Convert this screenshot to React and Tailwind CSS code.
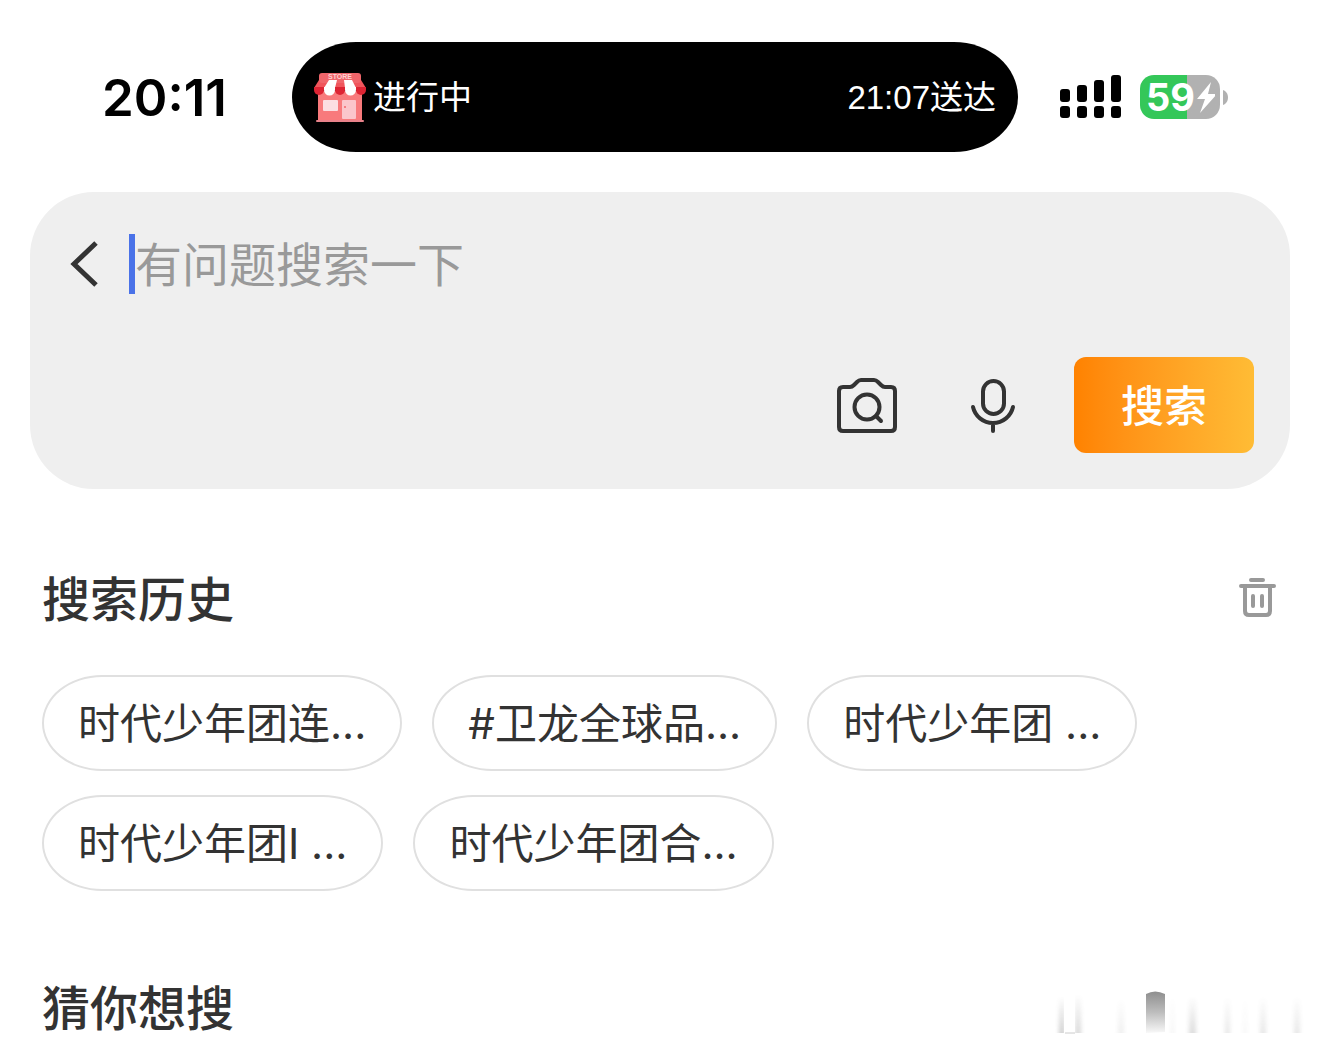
import { useState } from 'react';

// ── Search history ────────────────────────────────────────────────────────────
const history = [
  '时代少年团连...',
  '#卫龙全球品...',
  '时代少年团 ...',
  '时代少年团I ...',
  '时代少年团合...',
];

// ── Icons ─────────────────────────────────────────────────────────────────────
const StoreIcon = () => (
  <svg width="54" height="54" viewBox="0 0 54 54" aria-hidden="true">
    <rect x="5" y="20" width="44" height="30" fill="#f87a7c" />
    <rect x="3" y="49" width="48" height="2" rx="1" fill="#e8828a" />
    <path d="M6 9h42l5 8H1z" fill="#f0565c" />
    <rect x="6" y="2" width="42" height="10" rx="3" fill="#f0666b" />
    <path d="M16 9h8l-2 8H11z" fill="#fff" />
    <path d="M31 9h8l4 8H32z" fill="#fff" />
    <path d="M1 16h10v3a5 5 0 0 1-10 0z" fill="#dd2433" />
    <path d="M11 16h11v3a5.500 5.500 0 0 1-11 0z" fill="#fff" />
    <path d="M22 16h10v3a5 5 0 0 1-10 0z" fill="#dd2433" />
    <path d="M32 16h11v3a5.500 5.500 0 0 1-11 0z" fill="#fff" />
    <path d="M43 16h10v3a5 5 0 0 1-10 0z" fill="#dd2433" />
    <rect x="10" y="29" width="15" height="11" rx="1" fill="#fcdfe2" />
    <rect x="29" y="29" width="14" height="19" rx="1" fill="#fbc6cb" />
    <circle cx="32" cy="36" r="1" fill="#f0666b" />
    <text x="27" y="8" textAnchor="middle" fontSize="7" fontWeight="700" fill="#ffd3d3" fontFamily="Liberation Sans, sans-serif">STORE</text>
  </svg>
);

const SignalIcon = () => (
  <svg width="62" height="44" viewBox="0 0 62 44" aria-hidden="true">
    <rect x="0" y="14" width="10" height="13" rx="3" />
    <rect x="17" y="10" width="10" height="17" rx="3" />
    <rect x="34" y="5" width="10" height="22" rx="3" />
    <rect x="51" y="0" width="10" height="27" rx="3" />
    <rect x="0" y="31" width="10" height="12" rx="3" />
    <rect x="17" y="31" width="10" height="12" rx="3" />
    <rect x="34" y="31" width="10" height="12" rx="3" />
    <rect x="51" y="31" width="10" height="12" rx="3" />
  </svg>
);

const Battery = () => (
  <div className="flex items-center gap-[3px]">
    <div className="flex h-11 w-20 items-center rounded-[14px] bg-linear-to-r from-[#34c759] from-59% to-[#b1b1b1] to-59% pl-[6px]">
      <span className="font-['Inter',sans-serif] text-[38px] leading-[44px] font-bold text-white">59</span>
      <svg width="20" height="32" viewBox="0 0 20 32" fill="#fff" aria-hidden="true">
        <path d="M16 1 2 18h8L5 32l17-19h-9z" />
      </svg>
    </div>
    <svg width="5" height="15" viewBox="0 0 5 15" fill="#b1b1b1" aria-hidden="true">
      <path d="M0 0c3 1 5 4 5 7.500s-2 6.500-5 7.500z" />
    </svg>
  </div>
);

const BackIcon = () => (
  <svg width="28" height="48" viewBox="0 0 28 48" fill="none" stroke="#333" strokeWidth="5" aria-hidden="true">
    <path d="M26 3 4 24l22 21" />
  </svg>
);

const CameraSearchIcon = () => (
  <svg width="72" height="60" viewBox="0 0 72 60" fill="none" stroke="#333" strokeWidth="4" strokeLinecap="round" strokeLinejoin="round" aria-hidden="true">
    <path d="M12 12h7c2 0 3-1 4-2l3-3c1-1 2-2 4-2h13c2 0 3 1 4 2l3 3c1 1 2 2 4 2h6q4 0 4 4v36q0 4-4 4H12q-4 0-4-4V16q0-4 4-4z" />
    <circle cx="36" cy="32" r="12.500" />
    <path d="m45 41 5 5" />
  </svg>
);

const MicIcon = () => (
  <svg width="72" height="60" viewBox="0 0 72 60" fill="none" stroke="#333" strokeWidth="4" strokeLinecap="round" aria-hidden="true">
    <rect x="26" y="6" width="21" height="33" rx="10.500" />
    <path d="M16 32c2 9 10 16 20 16s18-7 20-16M36 48v8" />
  </svg>
);

const TrashIcon = () => (
  <svg width="39" height="46" viewBox="0 0 39 46" fill="none" stroke="#999" strokeWidth="4" strokeLinecap="round" aria-hidden="true">
    <path d="M12 2h12M2 8h33" />
    <path d="M6 8v25q0 4 4 4h17q4 0 4-4V8" />
    <path d="M14 18v10M23 18v10" />
  </svg>
);

// faded vertical streaks in the bottom corner
const streaks = [
  { x: 17, y: 16, w: 6,  o: 0.25 },
  { x: 33, y: 14, w: 6,  o: 0.2 },
  { x: 76, y: 18, w: 6,  o: 0.08 },
  { x: 129, y: 14, w: 3, o: 0.06 },
  { x: 147, y: 16, w: 7, o: 0.18 },
  { x: 183, y: 16, w: 5, o: 0.12 },
  { x: 201, y: 16, w: 4, o: 0.04 },
  { x: 218, y: 16, w: 6, o: 0.12 },
  { x: 252, y: 16, w: 6, o: 0.12 },
];

const Streaks = () => (
  <svg width="270" height="60" viewBox="0 0 270 60" aria-hidden="true">
    <defs>
      <linearGradient id="down" x1="0" y1="0" x2="0" y2="1">
        <stop offset="0" stopColor="#444" stopOpacity="0" />
        <stop offset="1" stopColor="#444" />
      </linearGradient>
      <linearGradient id="up" x1="0" y1="0" x2="0" y2="1">
        <stop offset="0" stopColor="#8e8e8e" />
        <stop offset="0.500" stopColor="#bdbdbd" />
        <stop offset="1" stopColor="#f8f8f8" />
      </linearGradient>
      <filter id="soft" x="-100%" width="300%">
        <feGaussianBlur stdDeviation="2 0" />
      </filter>
    </defs>
    {streaks.map(({ x, y, w, o }) => (
      <rect key={x} x={x} y={y} width={w} height={53 - y} fill="url(#down)" opacity={o} filter="url(#soft)" />
    ))}
    <path d="M22 14h11v39H22z" fill="#fff" />
    <path d="M23 53h10" stroke="#ccc" />
    <path d="M104 53V14q9-5 19 0v38z" fill="url(#up)" />
  </svg>
);

const SectionTitle = ({ children }) => (
  <h2 className="text-[48px] leading-[60px] font-medium">{children}</h2>
);

const App = () => {
  const [query, setQuery] = useState('');
  const [items, setItems] = useState(history);

  return (
    <div className="bg-white text-[#333] font-['Liberation_Sans','Noto_Sans_CJK_SC',sans-serif] overflow-hidden">

      {/* ── Status bar ── */}
      <header className="grid grid-cols-[292px_1fr_302px] items-center pt-[42px] text-black">
        <time className="pt-[2px] pl-[102px] font-['Inter',sans-serif] text-[51px] leading-[60px] font-semibold">20:11</time>
        <div className="flex h-[110px] items-center justify-between rounded-[64px/55px] bg-black pt-[2px] pl-[21px] pr-[22px] text-[33px] leading-[48px] text-white">
          <span className="flex items-center gap-[6px]">
            <StoreIcon />
            进行中
          </span>
          <span>21:07送达</span>
        </div>
        <div className="flex items-center gap-[18px] pl-[42px]">
          <SignalIcon />
          <Battery />
        </div>
      </header>

      {/* ── Search box ── */}
      <form
        className="mx-[30px] mt-10 rounded-[64px] bg-[#efefef] pt-[42px] pr-9 pb-9 pl-10"
        onSubmit={e => e.preventDefault()}
      >
        <div className="flex items-center">
          <button type="button" aria-label="返回" className="mr-[31px]">
            <BackIcon />
          </button>
          <span className="h-[60px] w-[6px] bg-[#4a72e8]" />
          <input
            type="text"
            aria-label="搜索"
            placeholder="有问题搜索一下"
            value={query}
            onChange={e => setQuery(e.target.value)}
            className="h-[60px] min-w-0 flex-1 bg-transparent pt-[2px] text-[47px] leading-[56px] caret-[#4a72e8] outline-none placeholder:text-[#999]"
          />
        </div>
        <div className="mt-[63px] flex items-center justify-end gap-[45px]">
          <div className="flex gap-[54px]">
            <button type="button" aria-label="拍照搜索"><CameraSearchIcon /></button>
            <button type="button" aria-label="语音搜索"><MicIcon /></button>
          </div>
          <button
            type="submit"
            className="h-24 w-[180px] rounded-xl bg-linear-to-r from-[#ff8200] to-[#ffbc35] pt-1 text-[43px] leading-[60px] font-medium text-white"
          >
            搜索
          </button>
        </div>
      </form>

      {/* ── History ── */}
      <section className="mt-[82px] px-[42px]">
        <div className="flex items-center justify-between">
          <SectionTitle>搜索历史</SectionTitle>
          <button type="button" aria-label="清空" onClick={() => setItems([])}>
            <TrashIcon />
          </button>
        </div>
        <div className="mt-11 flex flex-wrap gap-x-[30px] gap-y-6">
          {items.map(item => (
            <button
              key={item}
              type="button"
              onClick={() => setQuery(item)}
              className="h-24 rounded-[60px/48px] border-2 border-[#e0e0e0] px-[34px] pt-[2px] font-['Inter','Noto_Sans_CJK_SC',sans-serif] text-[42px] leading-[60px]"
            >
              {item}
            </button>
          ))}
        </div>
      </section>

      {/* ── Suggestions ── */}
      <section className="mt-[89px] flex items-center justify-between pr-2 pl-[42px]">
        <SectionTitle>猜你想搜</SectionTitle>
        <Streaks />
      </section>
    </div>
  );
};

export default App;
